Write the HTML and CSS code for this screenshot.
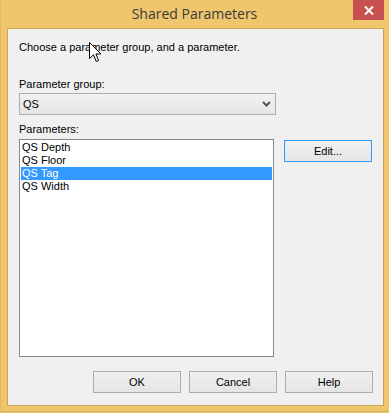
FILE: index.html
```html
<!doctype html>
<html lang="en">
<head>
	<meta charset="UTF-8" />
	<title>Shared Parameters</title>
<link rel="stylesheet" href="styles.css">
</head>
<body>
	<div class="window">
		<div class="titlebar">
			<span></span>
			<span class="title">Shared Parameters</span>
			<span class="close">
				<svg width="10" height="9" viewBox="0 0 10 9"><path d="M1 0.5 L9 8.5 M9 0.5 L1 8.5" stroke="#fff" stroke-width="2"/></svg>
			</span>
		</div>
		<div class="client">
			<p class="intro">Choose a parameter group, and a parameter.</p>
			<p class="label">Parameter group:</p>
			<div class="select">
				<span>QS</span>
				<svg width="9" height="6" viewBox="0 0 9 6"><path d="M1 1 L4.5 4.5 L8 1" stroke="#555" stroke-width="2" fill="none"/></svg>
			</div>
			<p class="label params">Parameters:</p>
			<div class="row">
				<ul class="list">
					<li>QS Depth</li>
					<li>QS Floor</li>
					<li class="active">QS Tag</li>
					<li>QS Width</li>
				</ul>
				<a href="javascript:;" class="btn default">Edit...</a>
			</div>
			<div class="buttons">
				<a href="javascript:;" class="btn">OK</a>
				<a href="javascript:;" class="btn">Cancel</a>
				<a href="javascript:;" class="btn">Help</a>
			</div>
			<!-- mouse pointer over the dialog -->
			<svg class="cursor" width="13" height="21" viewBox="0 0 13 21"><path d="M0.5 0.5 L0.5 16.5 L4.5 12.8 L7.3 19.5 L9.6 18.5 L6.9 12 L12 12 Z" fill="#fff" stroke="#000" stroke-width="1"/></svg>
		</div>
	</div>
</body>
</html>
```
FILE: styles.css
```css
*{
	margin: 0;
	padding: 0;
	box-sizing: border-box;
}
body{
	background: #efc66b;
	font-family: "Liberation Sans", Arial, sans-serif;
	font-size: 11px;
	color: #000;
}
.window{
	width: 389px;
	height: 412px;
	background: #efc66b;
	border-bottom: 1px solid #d8ae55;
	border-left: 1px solid #e2b95f;
	padding-left: 6px;
}
.titlebar{
	height: 28px;
	display: grid;
	grid-template-columns: 1fr auto 1fr;
	margin-left: -7px;
}
.title{
	font-family: "Open Sans", "Noto Sans", sans-serif;
	font-size: 14px;
	color: #3a3a3a;
	line-height: 28px;
}
.close{
	justify-self: end;
	width: 31px;
	height: 20px;
	margin-right: 5px;
	background: #c75050;
	display: flex;
	align-items: center;
	justify-content: center;
}
.client{
	position: relative;
	width: 377px;
	height: 378px;
	background: #f0f0f0;
	border: 1px solid #c9a557;
	padding: 12px 10px 0 11px;
	line-height: 13px;
}
.intro{
	height: 13px;
}
.label{
	margin-top: 24px;
	height: 13px;
}
.select{
	margin-top: 2px;
	width: 257px;
	height: 22px;
	border: 1px solid #acacac;
	background: linear-gradient(#f2f2f2, #e5e5e5);
	display: flex;
	align-items: center;
	justify-content: space-between;
	padding: 0 4px 0 3px;
}
.label.params{
	margin-top: 8px;
}
.row{
	margin-top: 3px;
	display: flex;
	gap: 10px;
	align-items: flex-start;
}
.list{
	list-style: none;
	width: 255px;
	height: 218px;
	background: #fff;
	border: 1px solid #828790;
	padding: 1px;
}
.list li{
	height: 13px;
	padding-left: 1px;
}
.list li.active{
	background: #3399ff;
	color: #fff;
}
.btn{
	display: flex;
	align-items: center;
	justify-content: center;
	width: 88px;
	height: 22px;
	border: 1px solid #acacac;
	background: linear-gradient(#f0f0f0, #e5e5e5);
	color: #000;
	text-decoration: none;
}
.row .btn{
	margin-top: 1px;
}
.btn.default{
	border-color: #3399ff;
}
.buttons{
	margin-top: 14px;
	display: flex;
	justify-content: flex-end;
	gap: 8px;
}
.cursor{
	position: absolute;
	left: 81px;
	top: 13px;
}
```
